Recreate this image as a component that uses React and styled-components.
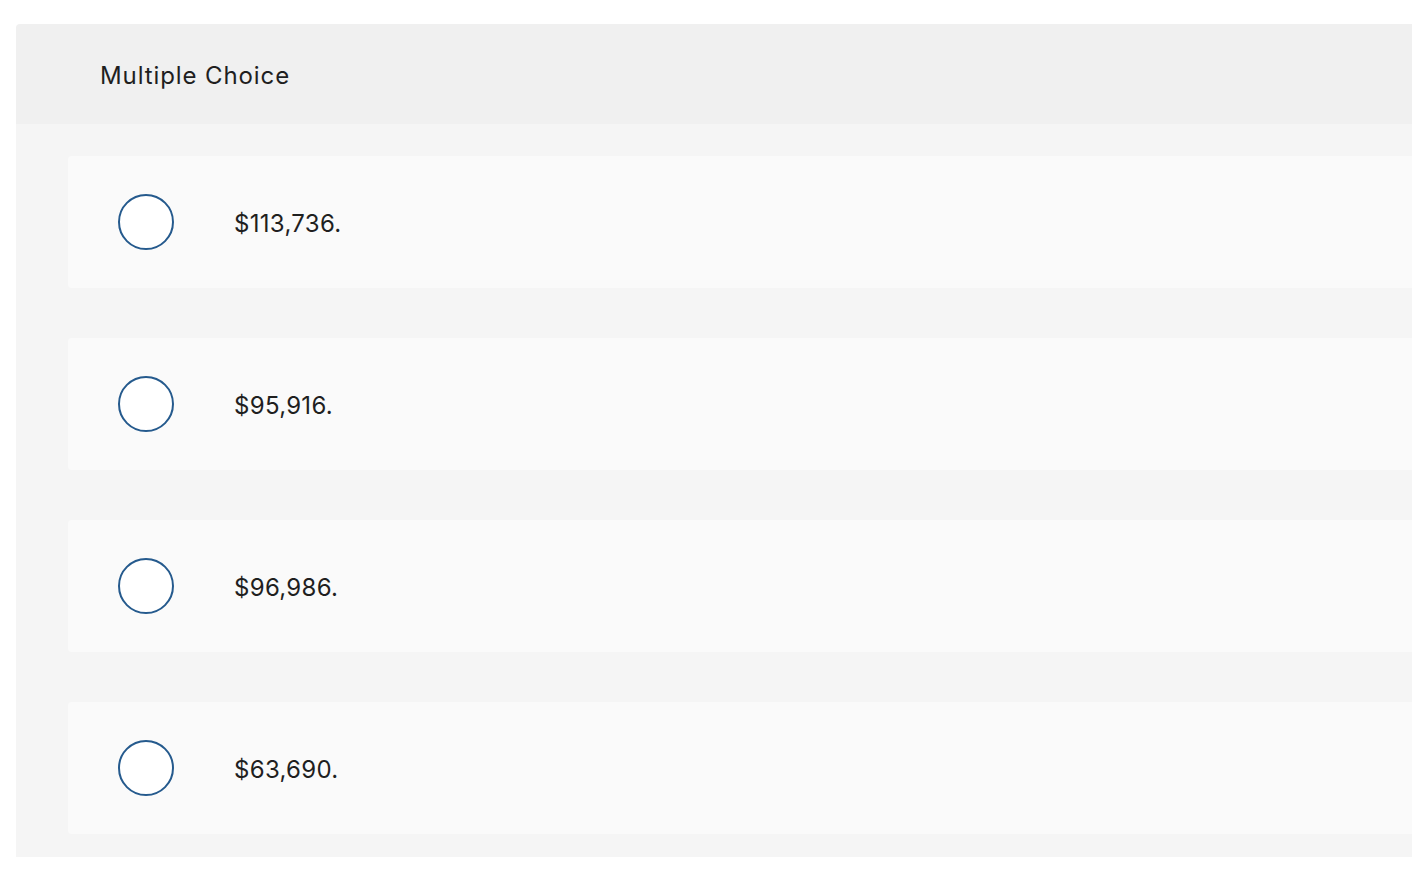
import React from "react";
import styled, { createGlobalStyle } from "styled-components";

const GlobalStyle = createGlobalStyle`
  html, body {
    margin: 0;
    padding: 0;
    background: #ffffff;
    overflow: hidden;
  }
  body {
    font-family: Inter, "Open Sans", sans-serif;
    color: #1f1f1f;
  }
`;

const Page = styled.div`
  width: 100vw;
  height: 100vh;
  overflow: hidden;
  padding-top: 24px;
  padding-left: 16px;
  box-sizing: border-box;
`;

const Panel = styled.section`
  width: 1500px;
  border-radius: 4px 4px 0 0;
  overflow: hidden;
`;

const Header = styled.div`
  height: 100px;
  box-sizing: border-box;
  padding-top: 2px;
  background: #f0f0f0;
  display: flex;
  align-items: center;
  padding-left: 84px;
  font-size: 24px;
  letter-spacing: 0.9px;
  color: #1f1f1f;
`;

const Body = styled.ul`
  list-style: none;
  margin: 0;
  background: #f5f5f5;
  padding: 32px 0 23px 52px;
  display: flex;
  flex-direction: column;
  gap: 50px;
`;

const Option = styled.li`
  height: 132px;
  background: #fafafa;
  border-radius: 4px;
  display: flex;
  align-items: center;
  padding-left: 50px;
  gap: 60px;
`;

const Radio = styled.span`
  width: 56px;
  height: 56px;
  box-sizing: border-box;
  border: 2px solid #255a8d;
  border-radius: 50%;
  background: #ffffff;
  flex-shrink: 0;
`;

const Label = styled.span`
  font-size: 24px;
  letter-spacing: 0.3px;
  padding-top: 2px;
  color: #1f1f1f;
`;

const answers = ["$113,736.", "$95,916.", "$96,986.", "$63,690."];

export default function App() {
  return (
    <>
      <GlobalStyle />
      <Page>
        <Panel>
          <Header>Multiple Choice</Header>
          <Body>
            {answers.map((a) => (
              <Option key={a}>
                <Radio />
                <Label>{a}</Label>
              </Option>
            ))}
          </Body>
        </Panel>
      </Page>
    </>
  );
}
